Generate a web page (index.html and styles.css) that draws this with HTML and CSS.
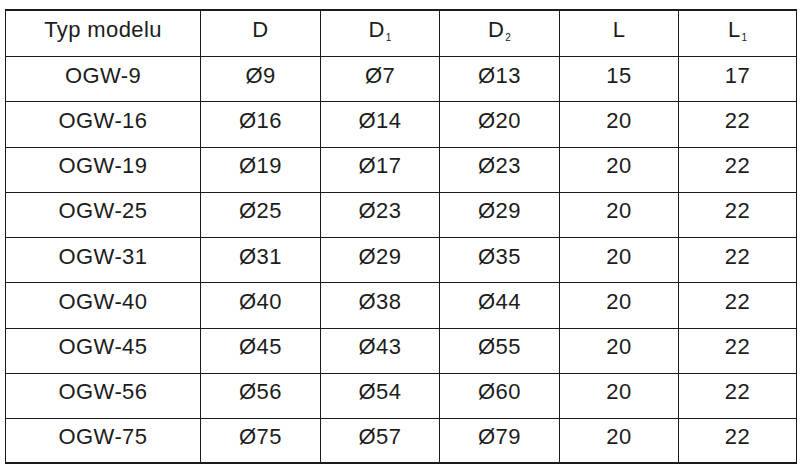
FILE: index.html
```html
<!DOCTYPE html>
<html lang="pl">
<head>
<meta charset="utf-8">
<title>Typ modelu</title>
<link rel="stylesheet" href="styles.css">
</head>
<body>
<table class="spec">
  <colgroup>
    <col class="c1"><col class="c2"><col class="c3"><col class="c4"><col class="c5"><col class="c6">
  </colgroup>
  <thead>
    <tr class="head"><th>Typ modelu</th><th>D</th><th>D<sub>1</sub></th><th>D<sub>2</sub></th><th>L</th><th>L<sub>1</sub></th></tr>
  </thead>
  <tbody>
    <tr><td>OGW-9</td><td>Ø9</td><td>Ø7</td><td>Ø13</td><td>15</td><td>17</td></tr>
    <tr><td>OGW-16</td><td>Ø16</td><td>Ø14</td><td>Ø20</td><td>20</td><td>22</td></tr>
    <tr><td>OGW-19</td><td>Ø19</td><td>Ø17</td><td>Ø23</td><td>20</td><td>22</td></tr>
    <tr><td>OGW-25</td><td>Ø25</td><td>Ø23</td><td>Ø29</td><td>20</td><td>22</td></tr>
    <tr><td>OGW-31</td><td>Ø31</td><td>Ø29</td><td>Ø35</td><td>20</td><td>22</td></tr>
    <tr><td>OGW-40</td><td>Ø40</td><td>Ø38</td><td>Ø44</td><td>20</td><td>22</td></tr>
    <tr><td>OGW-45</td><td>Ø45</td><td>Ø43</td><td>Ø55</td><td>20</td><td>22</td></tr>
    <tr><td>OGW-56</td><td>Ø56</td><td>Ø54</td><td>Ø60</td><td>20</td><td>22</td></tr>
    <tr class="last"><td>OGW-75</td><td>Ø75</td><td>Ø57</td><td>Ø79</td><td>20</td><td>22</td></tr>
  </tbody>
</table>
</body>
</html>
```
FILE: styles.css
```css
html, body {
  margin: 0;
  padding: 0;
  background: #ffffff;
}
body {
  padding: 9px 0 0 5px;
  font-family: "Liberation Sans", Arial, sans-serif;
  color: #1c1c1c;
}
.spec {
  border-collapse: separate;
  border-spacing: 0;
  table-layout: fixed;
  width: 792px;
  border-left: 1px solid #1a1a1a;
  border-top: 2px solid #1a1a1a;
}
.c1 { width: 195px; }
.c2 { width: 120px; }
.c3 { width: 119px; }
.c4 { width: 120px; }
.c5 { width: 119px; }
.c6 { width: 118px; }
.spec th,
.spec td {
  box-sizing: border-box;
  border-right: 1px solid #1a1a1a;
  border-bottom: 1px solid #1a1a1a;
  padding: 0 0 8px 0;
  text-align: center;
  vertical-align: middle;
  font-size: 22px;
  letter-spacing: 0.4px;
  font-weight: normal;
  line-height: 25px;
  white-space: nowrap;
}
.spec tr { height: 45.25px; }
.spec tr.head { height: 46px; }
.spec tr.last td { border-bottom: 2px solid #1a1a1a; }
.spec sub {
  font-size: 10px;
  letter-spacing: 0;
  vertical-align: -4px;
  line-height: 0;
  margin-left: 1px;
}
```
